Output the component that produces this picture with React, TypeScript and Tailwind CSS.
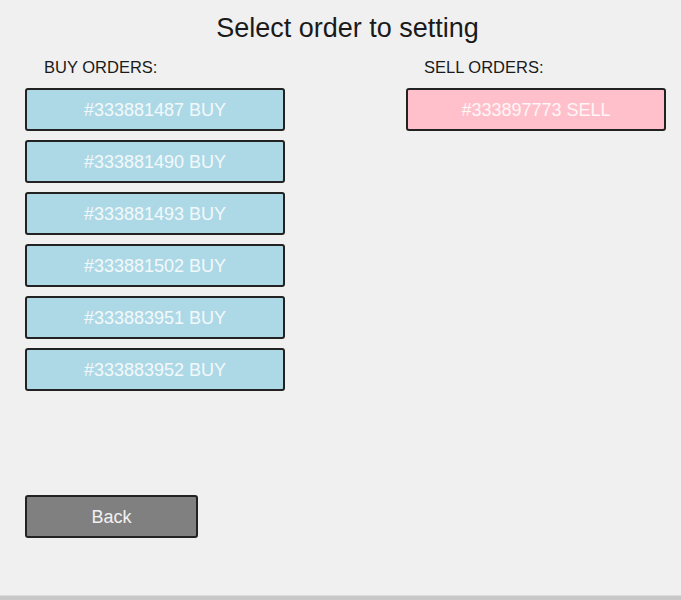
const buyOrders = ["333881487", "333881490", "333881493", "333881502", "333883951", "333883952"];
const sellOrders = ["333897773"];

function OrderButton({ label, tone }: { label: string; tone: "buy" | "sell" }) {
  return (
    <button
      className={`h-[43px] w-[260px] rounded-[3px] border-2 border-[#222] text-[18px] leading-none text-white/85 ${
        tone === "buy" ? "bg-[#add8e6]" : "bg-[#ffc0cb]"
      }`}
    >
      {label}
    </button>
  );
}

export default function App() {
  return (
    <div className="flex h-[600px] w-[681px] flex-col bg-[#f0f0f0] font-['Liberation_Sans',Arial,sans-serif] text-[#1a1a1a]">
      <h1 className="pt-[12px] pl-[14px] text-center text-[27px] leading-[32px]">Select order to setting</h1>

      <main className="mt-[13px] flex flex-1 gap-[121px] pl-[25px]">
        <section className="flex w-[260px] flex-col">
          <h2 className="pl-[19px] text-[16.5px] leading-[20px]">BUY ORDERS:</h2>
          <div className="mt-[11px] flex flex-col gap-[9px]">
            {buyOrders.map((id) => (
              <OrderButton key={id} label={`#${id} BUY`} tone="buy" />
            ))}
          </div>
          <button className="mt-[104px] h-[43px] w-[173px] rounded-[3px] border-2 border-[#222] bg-[#808080] text-[18px] leading-none text-white/90">
            Back
          </button>
        </section>

        <section className="flex w-[260px] flex-col">
          <h2 className="pl-[18px] text-[16.5px] leading-[20px]">SELL ORDERS:</h2>
          <div className="mt-[11px] flex flex-col gap-[9px]">
            {sellOrders.map((id) => (
              <OrderButton key={id} label={`#${id} SELL`} tone="sell" />
            ))}
          </div>
        </section>
      </main>

      <div className="h-[5px] border-t border-[#dcdcdc] bg-[#c8c8c8]" />
    </div>
  );
}
